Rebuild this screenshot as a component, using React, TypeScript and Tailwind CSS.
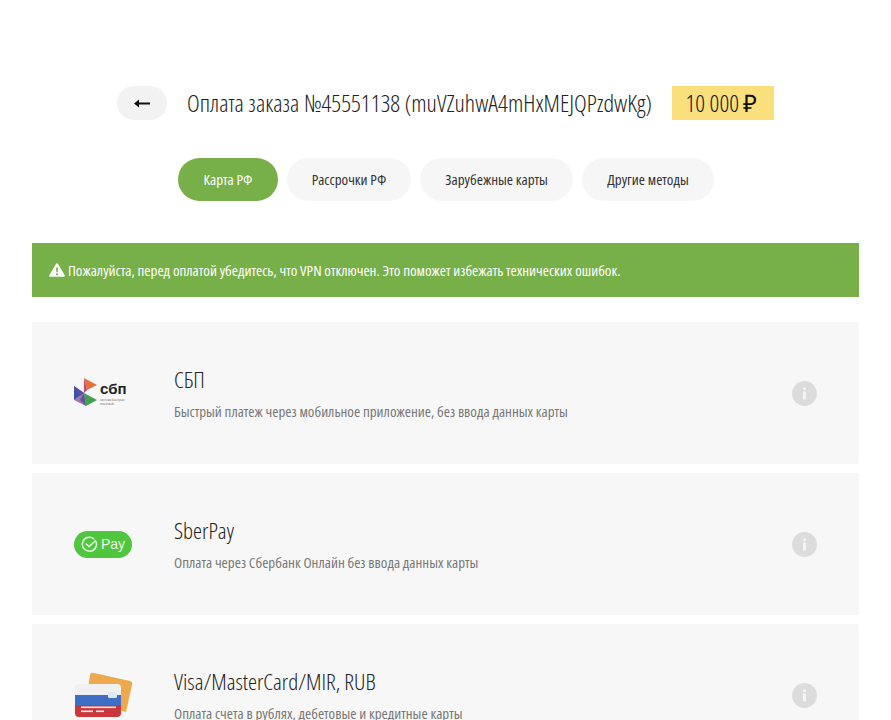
import React from 'react';

const tabs = ['Карта РФ', 'Рассрочки РФ', 'Зарубежные карты', 'Другие методы'];

const SbpLogo = () => (
  <div className="flex items-center w-[58px]">
    <svg width="24" height="30" viewBox="0 0 24 30" className="shrink-0">
      <polygon points="10,0 23,7 13,12" fill="#e8703a" />
      <polygon points="10,0 13,12 10,15" fill="#c2467e" />
      <polygon points="0,8 10,15 0,22" fill="#3a55a8" />
      <polygon points="0,8 10,15 6,18" fill="#5b4fa8" />
      <polygon points="10,15 23,22 12,28" fill="#3fa34d" />
      <polygon points="10,15 12,28 6,22" fill="#2a8a8a" />
      <polygon points="0,22 10,15 12,28" fill="#7b3f98" opacity="0.7" />
    </svg>
    <div className="ml-[2px] flex flex-col">
      <span className="font-['Liberation_Sans',sans-serif] text-[15px] font-bold leading-[18px] text-[#222]">сбп</span>
      <span className="w-[32px] text-[4px] leading-[4px] text-[#777]">система быстрых платежей</span>
    </div>
  </div>
);

const SberPayLogo = () => (
  <div className="flex h-[27px] w-[58px] items-center justify-center gap-[3px] rounded-full bg-[#4fc63d]">
    <svg width="17" height="17" viewBox="0 0 16 16" fill="none" stroke="#e8f8e4" strokeWidth="1.4">
      <path d="M14 5.2A6.6 6.6 0 1 1 12 2.6" strokeLinecap="round" />
      <path d="M5 7.6l2.6 2.4L13.6 4.4" strokeLinecap="round" strokeLinejoin="round" />
    </svg>
    <span className="font-['Liberation_Sans',sans-serif] text-[14px] font-medium text-[#e8f8e4]">Pay</span>
  </div>
);

const CardsLogo = () => (
  <svg width="60" height="47" viewBox="0 0 60 47">
    <path d="M16 3 Q17 0 20 1 L56 9 Q59 10 58 13 L52 40 L12 30 Z" fill="#eca94e" />
    <path d="M1 16 Q1 12 5 12 L43 12 Q47 12 47 16 L47 24 L1 24 Z" fill="#f0f0f0" />
    <rect x="1" y="23" width="46" height="10" fill="#3f6fc4" />
    <path d="M1 33 L47 33 L47 41 Q47 45 43 45 L5 45 Q1 45 1 41 Z" fill="#c9363e" />
    <rect x="34" y="20" width="9" height="6" rx="1.5" fill="#dbeaf5" />
    <rect x="7" y="34.5" width="35" height="1.6" fill="#f6e6e6" />
    <rect x="7" y="38.5" width="12" height="1.6" fill="#f6e6e6" />
    <rect x="22" y="38.5" width="8" height="1.6" fill="#f6e6e6" />
  </svg>
);

const InfoIcon = () => (
  <div className="flex h-[25px] w-[25px] items-center justify-center rounded-full bg-[#dcdcdc]">
    <svg width="5" height="13" viewBox="0 0 5 13" fill="#f5f5f5">
      <circle cx="2.5" cy="1.7" r="1.5" />
      <rect x="1" y="4.6" width="3" height="8" rx="0.6" />
    </svg>
  </div>
);

const methods = [
  { logo: <SbpLogo />, title: 'СБП', desc: 'Быстрый платеж через мобильное приложение, без ввода данных карты' },
  { logo: <SberPayLogo />, title: 'SberPay', desc: 'Оплата через Сбербанк Онлайн без ввода данных карты' },
  { logo: <CardsLogo />, title: 'Visa/MasterCard/MIR, RUB', desc: 'Оплата счета в рублях, дебетовые и кредитные карты' },
];

export default function App() {
  return (
    <div className="h-[720px] overflow-hidden bg-white px-8 pt-[86px] font-['Open_Sans',sans-serif] font-stretch-condensed text-[#333]">
      {/* Header */}
      <div className="flex items-center justify-center gap-5">
        <button className="flex h-[34px] w-[50px] items-center justify-center rounded-[17px] bg-[#f2f2f2]">
          <svg width="16" height="9" viewBox="0 0 16 9" fill="#111">
            <rect x="3" y="3.5" width="13" height="2" />
            <polygon points="0,4.5 5,0.5 5,8.5" />
          </svg>
        </button>
        <h1 className="w-[465px] whitespace-nowrap text-[24.15px] font-light leading-[34px] text-[#222]">
          Оплата заказа №45551138 (muVZuhwA4mHxMEJQPzdwKg)
        </h1>
        <div className="flex h-[34px] w-[102px] items-center justify-center bg-[#fbdf7c] pr-[3px] text-[24px] font-light text-[#111]">
          10 000 ₽
        </div>
      </div>

      {/* Tabs */}
      <div className="mt-[38px] flex justify-center gap-[9px] pl-[1px]">
        {tabs.map((t, i) => (
          <div
            key={t}
            className={`flex h-[43px] items-center justify-center rounded-full text-[15px] ${
              i === 0 ? 'w-[100px] bg-[#77af48] text-white' : 'bg-[#f6f6f6] text-[#333]'
            } ${i === 1 ? 'w-[124px]' : ''} ${i === 2 ? 'w-[153px]' : ''} ${i === 3 ? 'w-[132px]' : ''}`}
          >
            {t}
          </div>
        ))}
      </div>

      {/* Warning */}
      <div className="mt-[42px] flex h-[54px] items-center gap-[3px] bg-[#77af48] pl-[17px] text-[15px] text-white">
        <svg width="16" height="14" viewBox="0 0 16 14" fill="#fff">
          <path fillRule="evenodd" d="M8 0.3c.4 0 .7.2.9.5l6.8 11.5c.4.7-.1 1.5-.9 1.5H1.2c-.8 0-1.3-.8-.9-1.5L7.1.8C7.3.5 7.6.3 8 .3zM7 4.5l.3 4.8h1.4L9 4.5H7zm1 5.7a1.1 1.1 0 1 0 0 2.2 1.1 1.1 0 0 0 0-2.2z" />
        </svg>
        <span>Пожалуйста, перед оплатой убедитесь, что VPN отключен. Это поможет избежать технических ошибок.</span>
      </div>

      {/* Payment methods */}
      <div className="mt-[25px] flex flex-col gap-[9px]">
        {methods.map((m) => (
          <div key={m.title} className="flex h-[142px] shrink-0 items-center rounded-[2px] bg-[#f7f7f7] pl-[42px] pr-[30px]">
            <div className="flex w-[100px] shrink-0 items-center">{m.logo}</div>
            <div className="flex-1 pt-[1px]">
              <div className="text-[22.8px] font-light leading-[28px] text-[#222]">{m.title}</div>
              <div className="mt-[7px] text-[15px] leading-[20px] text-[#777]">{m.desc}</div>
            </div>
            <InfoIcon />
            <div className="w-[12px]" />
          </div>
        ))}
      </div>
    </div>
  );
}
